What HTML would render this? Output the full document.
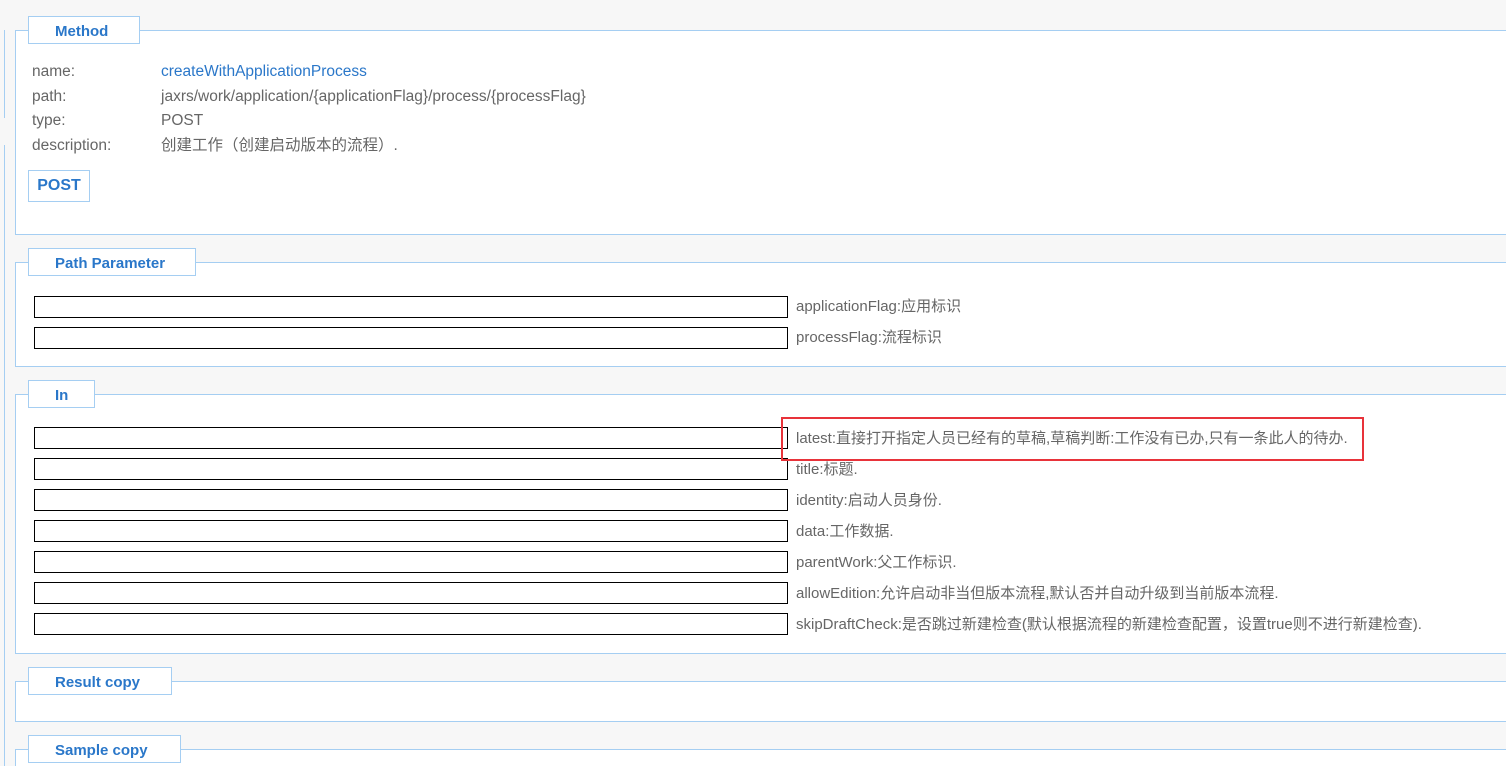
<!DOCTYPE html>
<html style="overflow:hidden;height:766px"><head><meta charset="utf-8"><style>
body{margin:0;width:1506px;height:766px;overflow:hidden;background:#f7f7f7;position:relative;font-family:"Segoe UI","Liberation Sans","Noto Sans CJK SC",sans-serif;}
.a{position:absolute;}
.box{position:absolute;left:15px;right:-5px;background:#fff;border:1px solid #a5cef2;box-sizing:border-box;}
.lg{position:absolute;left:28px;height:28px;background:#fff;border:1px solid #a5cef2;box-sizing:border-box;color:#2a77c9;font-weight:bold;font-size:15px;line-height:30px;padding-left:26px;}
.inp{position:absolute;left:34px;width:754px;height:22px;border:1px solid #000;box-sizing:border-box;background:#fff;}
.lb{position:absolute;left:796px;font-size:15px;color:#666;line-height:22px;white-space:nowrap;}
.m{position:absolute;font-size:15.5px;color:#666;line-height:20px;white-space:nowrap;}
</style></head><body>
<div class="a" style="left:4px;top:30px;width:1px;height:88px;background:#a5cef2"></div>
<div class="a" style="left:4px;top:145px;width:1px;height:621px;background:#a5cef2"></div>

<div class="box" style="top:30px;height:205px"></div>
<div class="lg" style="top:16px;width:112px">Method</div>
<div class="m" style="left:32px;top:62px">name:</div><div class="m" style="left:161px;top:62px;color:#2a77c9">createWithApplicationProcess</div>
<div class="m" style="left:32px;top:87px">path:</div><div class="m" style="left:161px;top:87px">jaxrs/work/application/{applicationFlag}/process/{processFlag}</div>
<div class="m" style="left:32px;top:111px">type:</div><div class="m" style="left:161px;top:111px">POST</div>
<div class="m" style="left:32px;top:136px">description:</div><div class="m" style="left:161px;top:136px">创建工作（创建启动版本的流程）.</div>
<div class="a" style="left:28px;top:170px;width:62px;height:32px;border:1px solid #a5cef2;box-sizing:border-box;background:#fff;color:#2a77c9;font-weight:bold;font-size:16px;line-height:29px;text-align:center">POST</div>

<div class="box" style="top:262px;height:105px"></div>
<div class="lg" style="top:248px;width:168px">Path Parameter</div>
<div class="inp" style="top:296px"></div><div class="lb" style="top:296px">applicationFlag:应用标识</div>
<div class="inp" style="top:327px"></div><div class="lb" style="top:327px">processFlag:流程标识</div>

<div class="box" style="top:394px;height:260px"></div>
<div class="lg" style="top:380px;width:67px">In</div>
<div class="inp" style="top:427px"></div><div class="lb" style="top:428px">latest:直接打开指定人员已经有的草稿,草稿判断:工作没有已办,只有一条此人的待办.</div>
<div class="inp" style="top:458px"></div><div class="lb" style="top:459px">title:标题.</div>
<div class="inp" style="top:489px"></div><div class="lb" style="top:490px">identity:启动人员身份.</div>
<div class="inp" style="top:520px"></div><div class="lb" style="top:521px">data:工作数据.</div>
<div class="inp" style="top:551px"></div><div class="lb" style="top:552px">parentWork:父工作标识.</div>
<div class="inp" style="top:582px"></div><div class="lb" style="top:583px">allowEdition:允许启动非当但版本流程,默认否并自动升级到当前版本流程.</div>
<div class="inp" style="top:613px"></div><div class="lb" style="top:614px">skipDraftCheck:是否跳过新建检查(默认根据流程的新建检查配置，设置true则不进行新建检查).</div>
<div class="a" style="left:781px;top:417px;width:583px;height:44px;border:2px solid #e8333a;box-sizing:border-box"></div>

<div class="box" style="top:681px;height:41px"></div>
<div class="lg" style="top:667px;width:144px">Result copy</div>

<div class="box" style="top:749px;height:40px"></div>
<div class="lg" style="top:735px;width:153px">Sample copy</div>
</body></html>
